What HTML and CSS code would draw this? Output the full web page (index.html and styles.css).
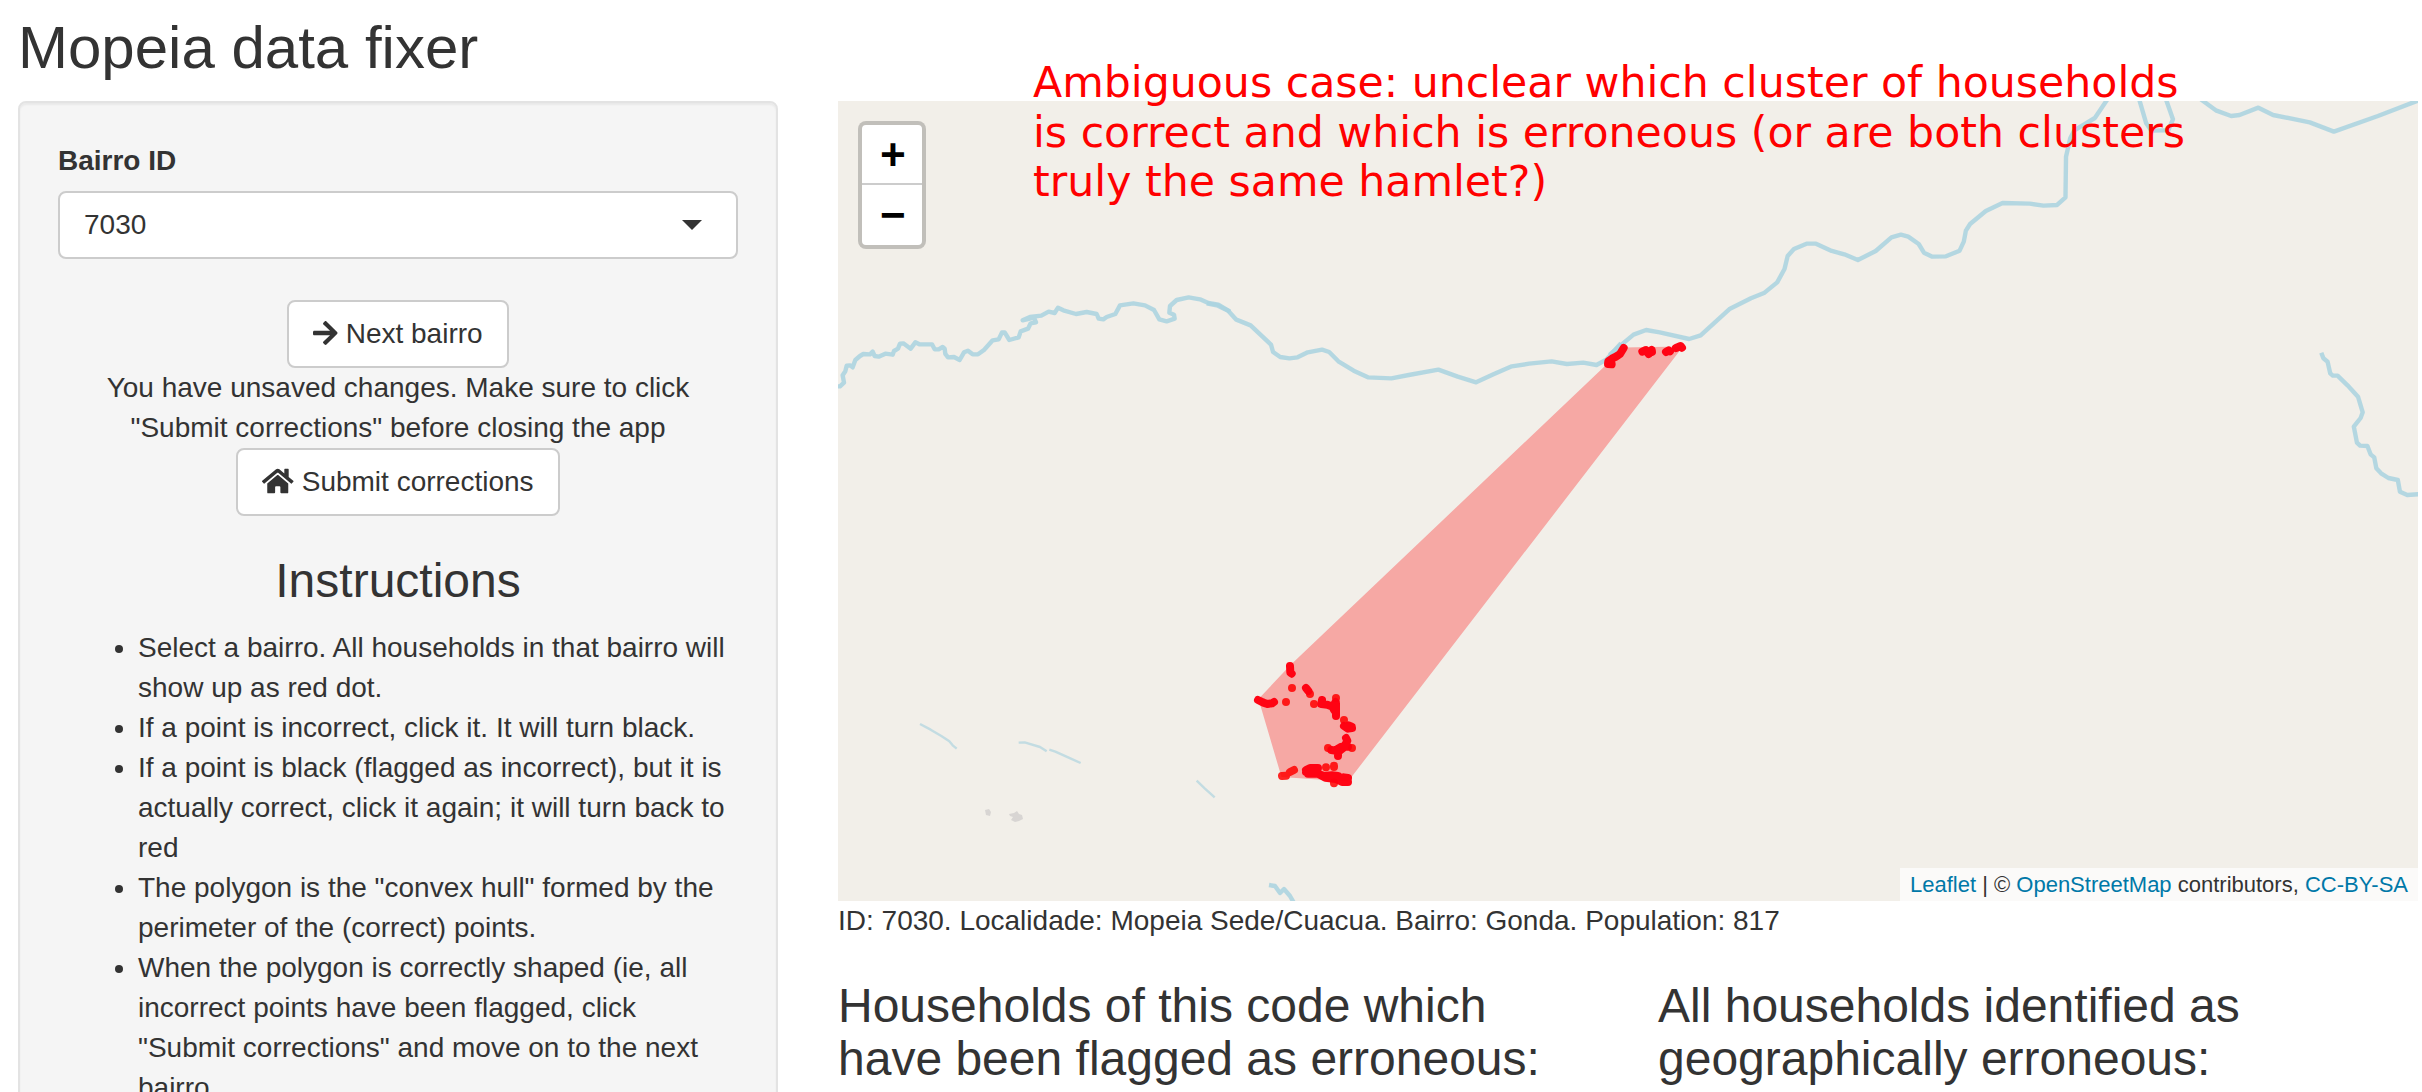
FILE: index.html
```html
<!DOCTYPE html>
<html lang="en">
<head>
<meta charset="utf-8">
<title>Mopeia data fixer</title>
<link rel="stylesheet" href="styles.css">
</head>
<body>
<h2 class="title">Mopeia data fixer</h2>
<div class="layout">
  <aside class="well">
    <label class="label">Bairro ID</label>
    <div class="select"><span>7030</span><i class="caret"></i></div>
    <div class="actions">
      <button class="btn" type="button"><svg class="icon-arrow" viewBox="0 0 448 512"><path d="M190.5 66.9l22.2-22.2c9.4-9.4 24.6-9.4 33.9 0L441 239c9.4 9.4 9.4 24.6 0 33.9L246.6 467.3c-9.4 9.4-24.6 9.4-33.9 0l-22.2-22.2c-9.5-9.5-9.3-25 .4-34.3L311.4 296H24c-13.3 0-24-10.7-24-24v-32c0-13.3 10.7-24 24-24h287.4L190.9 101.2c-9.8-9.3-10-24.8-.4-34.3z"/></svg> Next bairro</button>
      <div class="notice">You have unsaved changes. Make sure to click "Submit corrections" before closing the app</div>
      <button class="btn" type="button"><svg class="icon-home" viewBox="0 0 576 512"><path d="M280.37 148.26L96 300.11V464a16 16 0 0 0 16 16l112.06-.29a16 16 0 0 0 15.92-16V368a16 16 0 0 1 16-16h64a16 16 0 0 1 16 16v95.64a16 16 0 0 0 16 16.05L464 480a16 16 0 0 0 16-16V300L295.67 148.26a12.19 12.19 0 0 0-15.3 0zM571.6 251.47L488 182.56V44.05a12 12 0 0 0-12-12h-56a12 12 0 0 0-12 12v72.61L318.47 43a48 48 0 0 0-61 0L4.34 251.47a12 12 0 0 0-1.6 16.9l25.5 31A12 12 0 0 0 45.15 301l235.22-193.74a12.19 12.19 0 0 1 15.3 0L530.9 301a12 12 0 0 0 16.9-1.6l25.5-31a12 12 0 0 0-1.7-16.93z"/></svg> Submit corrections</button>
    </div>
    <h3 class="heading heading-center">Instructions</h3>
    <ul class="steps">
      <li>Select a bairro. All households in that bairro will show up as red dot.</li>
      <li>If a point is incorrect, click it. It will turn black.</li>
      <li>If a point is black (flagged as incorrect), but it is actually correct, click it again; it will turn back to red</li>
      <li>The polygon is the "convex hull" formed by the perimeter of the (correct) points.</li>
      <li>When the polygon is correctly shaped (ie, all incorrect points have been flagged, click "Submit corrections" and move on to the next bairro.</li>
    </ul>
  </aside>
  <main class="main">
    <div class="map">
      <svg class="tiles" viewBox="0 0 1580 800">
        <!-- rivers -->
        <g class="river">
          <path transform="translate(-8 169) scale(.33333)" d="M20 349L30 349 42 338 38 316 46 304 50 287 60 286 68 292 76 270 90 258 100 252 120 253 128 245 134 258 146 260 166 251 188 254 192 243 204 236 210 221 220 220 242 236 256 217 268 223 306 223 314 238 326 238 338 231 344 236 346 252 354 262 372 261 389 270 402 247 414 242 428 253 444 253 462 240 488 211 506 208 516 187 524 187 538 210 566 202 572 184 594 176 602 160 618 157 612 143 578 151 600 141 634 137 656 125 674 129 684 113 700 121 738 132 770 126 800 132 806 146 820 148 830 141 856 132 870 106 910 100 945 106 972 120 988 148 1010 154 1034 146 1032 134 1018 128 1020 108 1040 90 1076 82 1110 88 1135 99 1165 104 1200 125"/>
          <path transform="translate(-18 -41) scale(.5102 .33333)" d="M758 730L780 737 800 752 816 779 844 796 884 854 888 876 902 891 920 895 936 892 956 877 984 869 998 876 1016 904 1046 932 1074 952 1120 955 1154 945 1212 929 1250 950 1286 967 1320 943 1356 919 1390 911 1434 904 1464 912 1496 908 1522 915 1542 898 1570 850"/>
          <path transform="translate(762 -41) scale(.5242 .33333)" d="M18 885L44 850 64 824 88 810 114 817 170 837 192 826 248 746 288 715 314 698 338 667 352 627 358 588 370 567 394 551 412 551 442 573 466 583 492 600 526 573 556 532 574 524 588 530 608 552 618 578 634 590 660 589 686 572 694 545 698 512 706 492 736 453 768 429 820 431 846 437 872 435 888 412 889 290 897 235 905 211 944 174 968 118M1028 115L1042 190 1052 212 1076 211M1076 211L1084 211 1093 178 1079 115M1146 118L1176 152 1204 168 1220 165 1256 143 1284 165 1354 187 1400 215 1484 168 1560 122"/>
          <path transform="translate(762 -41) scale(.5242 .33333)" d="M1376 878L1380 895 1388 905 1393 940 1398 947 1407 947 1426 976 1446 1010 1455 1057 1451 1074 1438 1100 1444 1148 1450 1157 1464 1158 1470 1183 1477 1192 1481 1225 1490 1240 1504 1254 1522 1260 1526 1295 1540 1305 1565 1302"/>
          <path d="M431 784L437 785 442 792 446 788 452 795 456 802"/>
        </g>
        <g class="stream" transform="translate(42 589) scale(.33333)">
          <path d="M120 102L152 119 184 138 208 154 218 166 230 176M416 158L434 157 480 171 500 184M508 179L526 185 566 203 602 219M950 272L974 295 1004 322"/>
        </g>
        <path class="pond" d="M147 709l4-1 2 3-1 4-4-1zM171 713l5-1 3-2 2 3 3 1 1 4-4 2-4 1-4-2 2-3-3-1z"/>
        <!-- convex hull -->
        <path class="hull" d="M420.500 598L452 564.500 768 264 785 246.500 845 245.500 510 680.500 443.500 676z"/>
        <!-- households -->
        <g class="household" transform="translate(362 529) scale(.33333)">
          <path d="M276 174h0M258 216h0M342 222h0M432 270h0M456 354h0M384 354h0M246 438h0L258 437M270 426L282 420M330 192h0M408 204h0M402 460v-3M378 412h0M402 411v-4"/>
          <path class="dense" d="M270 108L271 128 275 131M174 210L190 218 202 222 216 220 222 216M318 174L325 183M366 210L364 222 382 224 398 230 407 216M408 220V258M396 226L402 240M432 288L444 296 456 294M446 286L455 290M438 324L442 332 432 352 414 366 414 378M394 360L404 362 424 350 444 350M318 420L330 414 354 414M318 426L350 430 372 438 396 436 414 438M324 431H354L376 443 408 447 426 456 444 456M432 442L444 444 442 456"/>
        </g>
        <g class="household" transform="translate(722 209) scale(.33333)">
          <path class="dense" d="M191 114L180 132 168 140 156 146 145 154 144 162 155 163M247 125L258 120 266 132 275 120 276 126M318 126L326 121 330 124M348 114L362 108 366 113"/>
        </g>
      </svg>
      <div class="zoom"><a>+</a><a>−</a></div>
      <div class="note">Ambiguous case: unclear which cluster of households<br>is correct and which is erroneous (or are both clusters<br>truly the same hamlet?)</div>
      <div class="attribution"><a>Leaflet</a> | © <a>OpenStreetMap</a> contributors, <a>CC-BY-SA</a></div>
    </div>
    <div>ID: 7030. Localidade: Mopeia Sede/Cuacua. Bairro: Gonda. Population: 817</div>
    <div class="tables">
      <h3 class="heading">Households of this code which have been flagged as erroneous:</h3>
      <h3 class="heading">All households identified as geographically erroneous:</h3>
    </div>
  </main>
</div>
</body>
</html>
```
FILE: styles.css
```css
* { box-sizing: border-box; }
html, body { height: 100%; overflow: hidden; }
body {
  margin: 0;
  padding: 15px 4px 0 18px;
  font: 28px/40px "Liberation Sans", Arial, sans-serif;
  color: #333;
  background: #fff;
}
.title { margin: 0 0 20px; font-size: 60px; line-height: 66px; font-weight: 400; }
.layout { display: grid; grid-template-columns: 760px 1580px; column-gap: 60px; align-items: start; }
.well {
  padding: 38px;
  background: #f5f5f5;
  border: 2px solid #e3e3e3;
  border-radius: 8px;
  box-shadow: inset 0 2px 2px rgba(0, 0, 0, .05);
}
.label { display: block; margin-bottom: 10px; font-weight: 700; }
.select {
  display: flex;
  align-items: center;
  justify-content: space-between;
  height: 68px;
  margin-bottom: 41px;
  padding: 0 34px 0 24px;
  background: #fff;
  border: 2px solid #ccc;
  border-radius: 8px;
}
.caret { border: 10px solid transparent; border-top-color: #333; border-bottom: 0; }
.actions { display: flex; flex-direction: column; align-items: center; text-align: center; }
.btn {
  height: 68px;
  padding: 12px 24px;
  font: inherit;
  color: #333;
  background: #fff;
  border: 2px solid #ccc;
  border-radius: 8px;
}
.btn svg { height: 28px; vertical-align: -3.5px; fill: #333; }
.icon-arrow { width: 24.5px; }
.icon-home { width: 31.5px; }
.notice { width: 100%; padding: 0 20px; }
.heading { margin: 39px 0 20px; font-size: 48px; line-height: 52.6px; font-weight: 400; }
.heading-center { text-align: center; }
.steps { margin: 0; padding-left: 80px; }
.map { position: relative; height: 800px; background: #f2efe9; }
.tiles { display: block; width: 100%; height: 100%; }
.river path, .stream path { fill: none; stroke: #aad3df; stroke-linejoin: round; vector-effect: non-scaling-stroke; }
.river path { stroke-width: 4.4px; stroke-opacity: .86; }
.stream path { stroke-width: 2.4px; opacity: .65; }
.pond { fill: #d8d5d3; }
.hull { fill: #ff0308; fill-opacity: .3; }
.household path { fill: none; stroke: #f00; stroke-opacity: .85; stroke-width: 24px; stroke-linecap: round; stroke-linejoin: round; }
.household .dense { stroke: #ff0010; stroke-opacity: .98; }
.zoom {
  position: absolute;
  top: 20px;
  left: 20px;
  width: 68px;
  border: 4px solid rgba(0, 0, 0, .2);
  border-radius: 8px;
  background: #fff;
  background-clip: padding-box;
}
.zoom a {
  display: block;
  height: 60px;
  padding-top: 3px;
  font: bold 44px/57px "Liberation Mono", monospace;
  line-height: 60px;
  text-align: center;
  text-indent: 2px;
  color: #000;
}
.zoom a:first-child { border-bottom: 2px solid #ccc; }
.note {
  position: absolute;
  top: -43px;
  left: 195px;
  font: 42.67px/49.5px "DejaVu Sans", sans-serif;
  color: #f00;
  white-space: nowrap;
}
.attribution {
  position: absolute;
  right: 0;
  bottom: 0;
  padding: 0 10px;
  font-size: 22px;
  line-height: 33px;
  background: rgba(255, 255, 255, .7);
}
.attribution a { color: #0078a8; }
.tables { display: grid; grid-template-columns: 1fr 1fr; column-gap: 60px; }
```
